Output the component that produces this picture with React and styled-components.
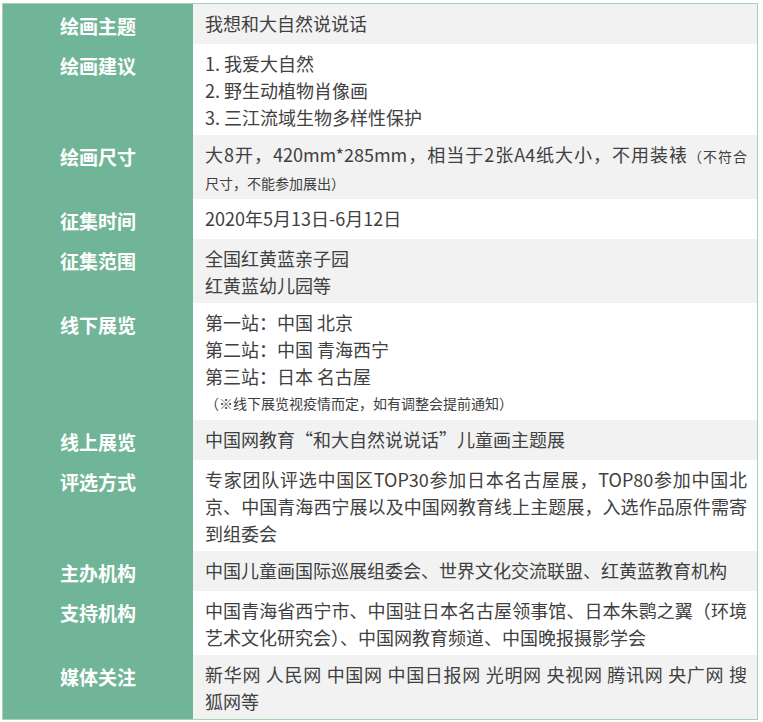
import React from "react";
import styled, { createGlobalStyle } from "styled-components";

const Global = createGlobalStyle`
  html, body { margin: 0; padding: 0; background: #ffffff; }
  body { font-family: "Noto Sans CJK SC", "Noto Sans", sans-serif; }
`;

const Page = styled.div`
  padding: 3px 0 0 2px;
`;

const Table = styled.div`
  width: 756px;
  box-sizing: border-box;
  border: 1px solid #a6d4b0;
  display: flex;
  flex-direction: column;
  background: #71b598;
`;

const Row = styled.div`
  display: grid;
  grid-template-columns: 190px 1fr;
`;

const Head = styled.div`
  background: #71b598;
  color: #ffffff;
  font-weight: 700;
  font-size: 19px;
  line-height: 30px;
  text-align: center;
  padding: 7px 0 3px;
  white-space: nowrap;
`;

const Cell = styled.div`
  background: ${(p) => (p.$shade ? "#f2f2f2" : "#ffffff")};
  color: #404040;
  font-size: 18px;
  padding: 6px 10px 4px 12px;
  overflow: hidden;
`;

const Line = styled.div`
  white-space: nowrap;
  height: ${(p) => (p.$note ? "26px" : "27px")};
  line-height: ${(p) => (p.$note ? "26px" : "27px")};
  font-size: ${(p) => (p.$note ? "14px" : "18px")};
  text-align: ${(p) => (p.$justify ? "justify" : "left")};
  text-align-last: ${(p) => (p.$justify ? "justify" : "left")};
  text-justify: inter-character;
`;

const Small = styled.span`
  font-size: 14px;
  line-height: 1;
`;

const rows = [
  { h: "绘画主题", lines: [["我想和大自然说说话"]] },
  {
    h: "绘画建议",
    lines: [["1. 我爱大自然"], ["2. 野生动植物肖像画"], ["3. 三江流域生物多样性保护"]],
  },
  {
    h: "绘画尺寸",
    lines: [
      ["大8开，420mm*285mm，相当于2张A4纸大小，不用装裱", "（不符合", true],
      ["", "尺寸，不能参加展出）"],
    ],
  },
  { h: "征集时间", lines: [["2020年5月13日-6月12日"]] },
  { h: "征集范围", lines: [["全国红黄蓝亲子园"], ["红黄蓝幼儿园等"]] },
  {
    h: "线下展览",
    lines: [
      ["第一站：中国 北京"],
      ["第二站：中国 青海西宁"],
      ["第三站：日本 名古屋"],
      { note: "（※线下展览视疫情而定，如有调整会提前通知）" },
    ],
  },
  { h: "线上展览", lines: [["中国网教育“和大自然说说话”儿童画主题展"]] },
  {
    h: "评选方式",
    lines: [
      ["专家团队评选中国区TOP30参加日本名古屋展，TOP80参加中国北", "", true],
      ["京、中国青海西宁展以及中国网教育线上主题展，入选作品原件需寄", "", true],
      ["到组委会"],
    ],
  },
  { h: "主办机构", lines: [["中国儿童画国际巡展组委会、世界文化交流联盟、红黄蓝教育机构"]] },
  {
    h: "支持机构",
    lines: [
      ["中国青海省西宁市、中国驻日本名古屋领事馆、日本朱鹮之翼（环境", "", true],
      ["艺术文化研究会）、中国网教育频道、中国晚报摄影学会"],
    ],
  },
  {
    h: "媒体关注",
    lines: [
      ["新华网 人民网 中国网 中国日报网 光明网 央视网 腾讯网 央广网 搜", "", true],
      ["狐网等"],
    ],
  },
];

export default function App() {
  return (
    <Page>
      <Global />
      <Table>
        {rows.map((r, i) => (
          <Row key={r.h}>
            <Head>{r.h}</Head>
            <Cell $shade={i % 2 === 0}>
              {r.lines.map((l, j) =>
                l.note ? (
                  <Line key={j} $note>
                    {l.note}
                  </Line>
                ) : (
                  <Line key={j} $justify={!!l[2]}>
                    {l[0]}
                    {l[1] && <Small>{l[1]}</Small>}
                  </Line>
                )
              )}
            </Cell>
          </Row>
        ))}
      </Table>
    </Page>
  );
}
